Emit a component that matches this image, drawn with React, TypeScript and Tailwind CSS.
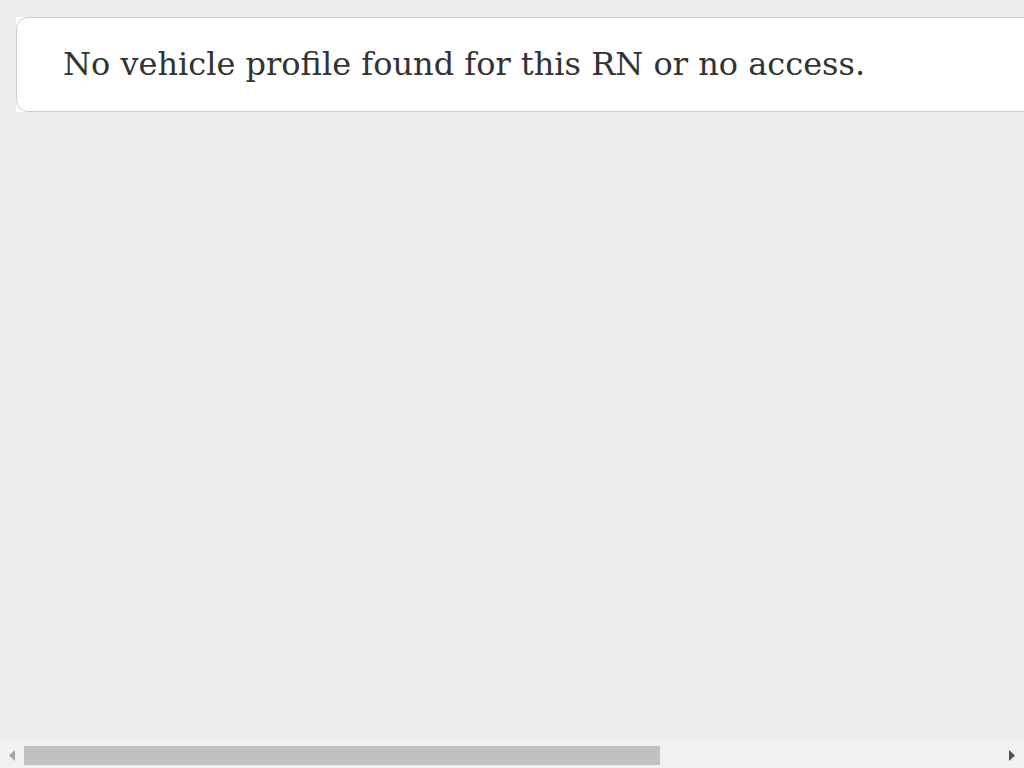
import React from 'react';

export default function App() {
  return (
    <div className="flex h-screen w-screen flex-col overflow-hidden bg-[#eeeeee]" style={{ fontFamily: '"DejaVu Serif", serif' }}>
      <div className="flex-1 overflow-hidden">
        <div className="w-[1600px] pt-[17px] px-4">
          {/* Empty-state card */}
          <div className="bg-white">
            <div className="rounded-xl border border-[#cccccc] bg-white pl-[46px] pr-6 py-[28px]">
              <p className="text-[32px] leading-[37px] text-[#333333]">No vehicle profile found for this RN or no access.</p>
            </div>
          </div>
        </div>
      </div>

      {/* horizontal scrollbar */}
      <div className="flex h-[26px] shrink-0 items-center bg-[#f1f1f1] pt-[1px]">
        <div className="flex w-[24px] justify-center">
          <svg width="6" height="11" viewBox="0 0 6 11"><path d="M6 0 L0 5.5 L6 11 Z" fill="#a3a3a3" /></svg>
        </div>
        <div className="h-[19px] w-[636px] bg-[#c1c1c1]" />
        <div className="flex-1" />
        <div className="flex w-[24px] justify-center">
          <svg width="6" height="11" viewBox="0 0 6 11"><path d="M0 0 L6 5.5 L0 11 Z" fill="#505050" /></svg>
        </div>
      </div>
    </div>
  );
}
